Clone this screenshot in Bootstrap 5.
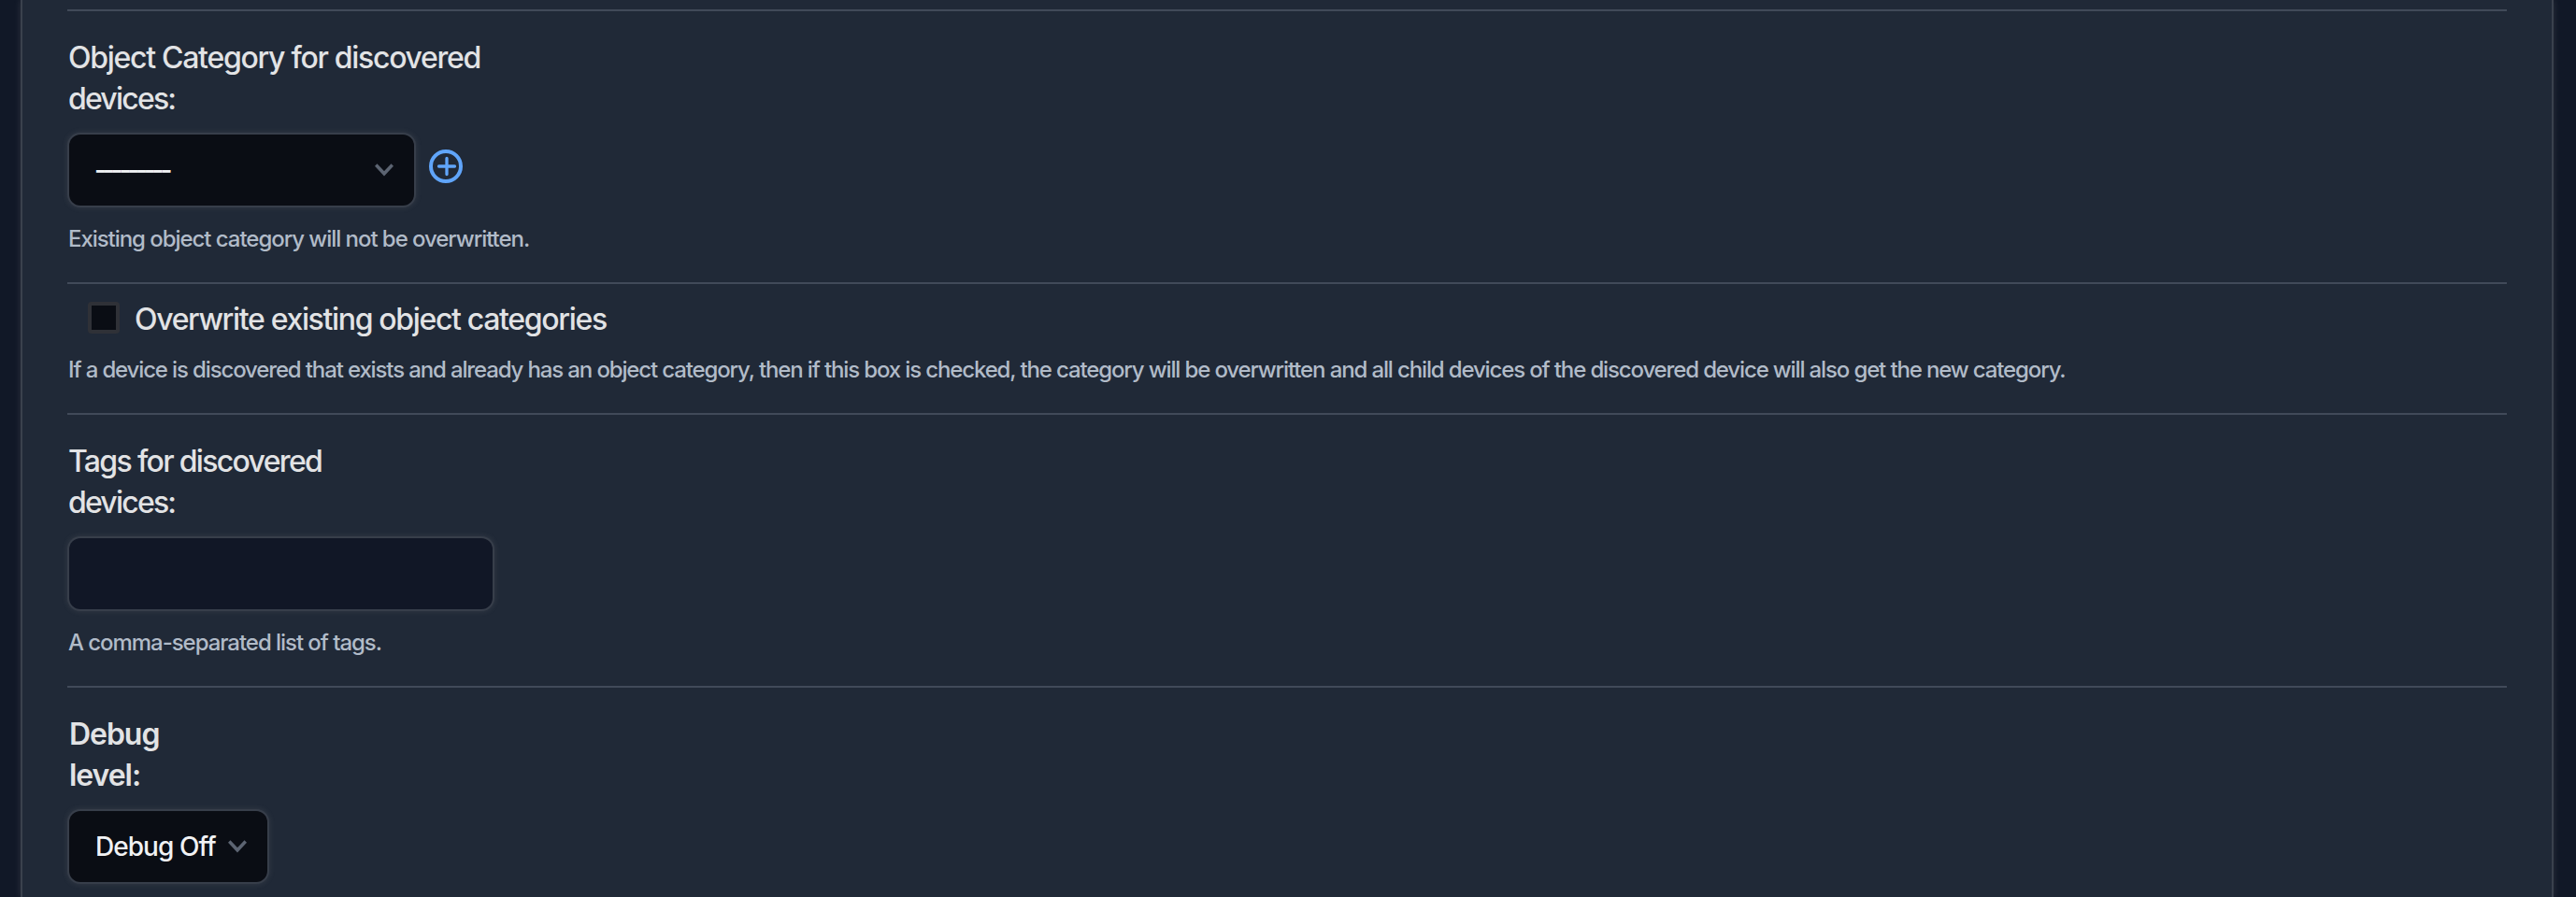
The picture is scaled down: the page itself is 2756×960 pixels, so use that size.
<!DOCTYPE html>
<html lang="en" data-bs-theme="dark">
<head>
<meta charset="utf-8">
<meta name="viewport" content="width=device-width, initial-scale=1">
<title>Discovery job</title>
<link href="https://cdn.jsdelivr.net/npm/bootstrap@5.3.0/dist/css/bootstrap.min.css" rel="stylesheet">
<style>
body{background:#111827;font-family:Inter,"Liberation Sans",sans-serif;color:#e2e3e5;height:960px;overflow:hidden}
.panel{margin:0 24px 0 22px;height:960px;background:#202937;border:solid #3a414d;border-width:0 2px;padding:10px 48px 0;box-shadow:0 0 7px rgba(160,160,160,.2)}
.field-row{border-top:2px solid #414a59;padding:28px 2px 30px}
.field-row.check-row{padding-top:16px}
.lbl{font-size:32px;line-height:44px;font-weight:500;letter-spacing:-1.29px;display:block;white-space:nowrap;margin-left:-1px}
.lbl .tight{letter-spacing:-1.8px}
.lbl.tags{letter-spacing:-1.68px}
.check-row .lbl{letter-spacing:-1.34px}
.lbl.strong-lbl{font-weight:600;letter-spacing:-1.05px;margin-left:0}
.hint{font-size:24px;line-height:32px;font-weight:500;color:#b1bbc8;letter-spacing:-1.05px;white-space:nowrap;margin:20px 0 0 -1px}
.check-row .hint{letter-spacing:-1.138px;margin-top:16px}
.control{height:76px;border-radius:12px;box-shadow:0 0 0 2px #373e4a,0 0 6px 2px rgba(150,150,150,.18);font-size:28px;letter-spacing:-.95px;color:#f1f2f4;white-space:nowrap;margin-top:16px;padding:0 22px 0 27px}
.pick{background:#0a0d14}
.pick svg{margin-top:-1px}
.entry{background:#111726;width:453px}
.wide{width:369px}
.narrow{width:212px}
.dashes{letter-spacing:-4.15px;font-weight:500}
.debug-value{font-weight:500;padding-left:1px}
.tick{width:34px;height:34px;border:4px solid #2f3137;border-radius:4px;background:#0a0d14;margin:3px 17px 0 20px}
.add{margin:8px 0 0 16px}
</style>
</head>
<body>
<main class="panel">
  <section class="field-row">
    <label class="lbl">Object Category for discovered<br><span class="tight">devices:</span></label>
    <div class="d-flex align-items-center">
      <div class="control pick wide d-flex align-items-center justify-content-between flex-shrink-0">
        <span class="dashes">---------</span>
        <svg width="20" height="14" viewBox="0 0 20 14" fill="none" stroke="#5c6472" stroke-width="3.6"><path d="M1.2 1.5 10 10.8 18.8 1.5"/></svg>
      </div>
      <a class="add d-flex" href="#" aria-label="Add"><svg width="36" height="36" viewBox="0 0 36 36" fill="none" stroke="#60a5fa"><circle cx="18" cy="18" r="16" stroke-width="4"/><path d="M19 9.5v17M10.5 18h17" stroke-width="3.3" stroke-linecap="round"/></svg></a>
    </div>
    <div class="hint">Existing object category will not be overwritten.</div>
  </section>
  <section class="field-row check-row">
    <div class="d-flex align-items-start">
      <span class="tick" role="checkbox" aria-checked="false"></span>
      <label class="lbl">Overwrite existing object categories</label>
    </div>
    <div class="hint">If a device is discovered that exists and already has an object category, then if this box is checked, the category will be overwritten and all child devices of the discovered device will also get the new category.</div>
  </section>
  <section class="field-row">
    <label class="lbl tags">Tags for discovered<br><span class="tight">devices:</span></label>
    <div class="control entry"></div>
    <div class="hint">A comma-separated list of tags.</div>
  </section>
  <section class="field-row">
    <label class="lbl strong-lbl">Debug<br>level:</label>
    <div class="control pick narrow d-flex align-items-center justify-content-between">
      <span class="debug-value">Debug Off</span>
      <svg width="20" height="14" viewBox="0 0 20 14" fill="none" stroke="#5c6472" stroke-width="3.6"><path d="M1.2 1.5 10 10.8 18.8 1.5"/></svg>
    </div>
  </section>
</main>
<script src="https://cdn.jsdelivr.net/npm/bootstrap@5.3.0/dist/js/bootstrap.bundle.min.js"></script>
</body>
</html>
